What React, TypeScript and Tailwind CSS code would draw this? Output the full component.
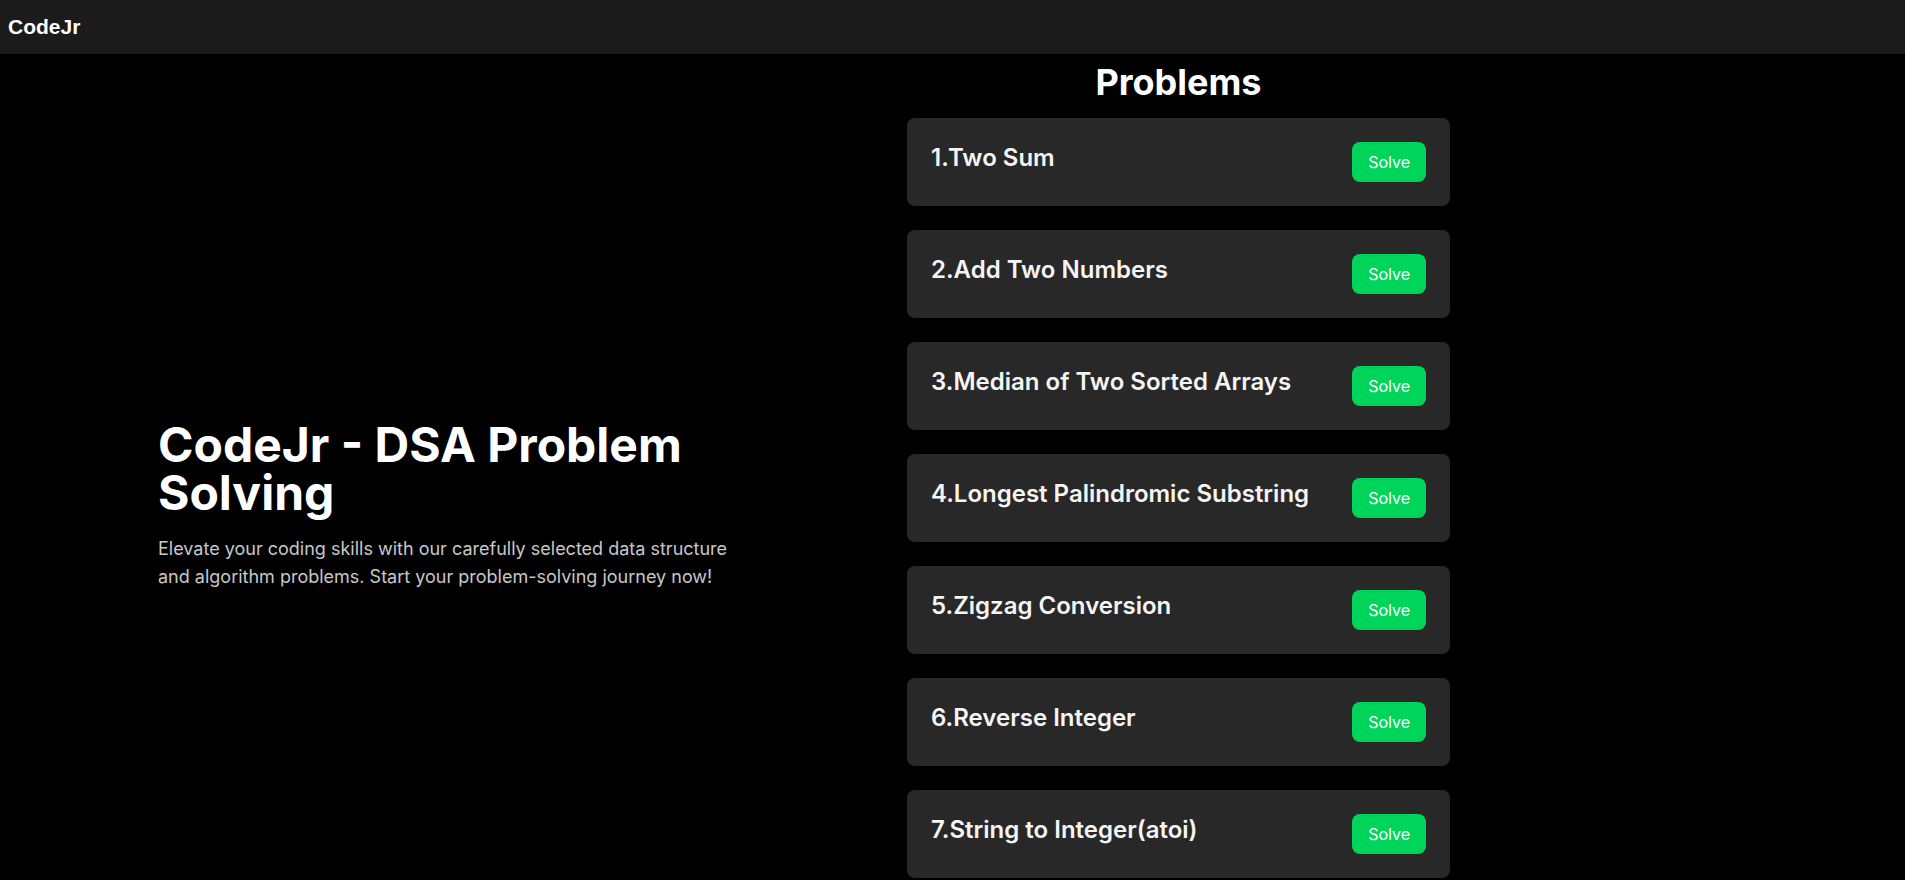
import React from 'react';

const problems = [
  "Two Sum",
  "Add Two Numbers",
  "Median of Two Sorted Arrays",
  "Longest Palindromic Substring",
  "Zigzag Conversion",
  "Reverse Integer",
  "String to Integer(atoi)",
];

export default function App() {
  return (
    <div className="min-h-screen bg-black text-white font-['Inter',sans-serif]">
      <nav className="h-[54px] bg-[#1b1b1b] flex items-center px-2">
        <span className="font-['Liberation_Sans',Arial,sans-serif] font-bold text-[21px]">CodeJr</span>
      </nav>

      <main className="flex items-start">
        <section className="w-[907px] h-[904px] flex items-center pl-[158px]">
          <div className="max-w-xl">
            <h1 className="text-5xl font-bold leading-none">CodeJr - DSA Problem Solving</h1>
            <p className="mt-[18px] text-lg leading-7 text-[#c8c8c8]">
              Elevate your coding skills with our carefully selected data structure and algorithm problems. Start your
              problem-solving journey now!
            </p>
          </div>
        </section>

        <section className="w-[543px] pt-2">
          <h2 className="text-4xl font-bold text-center mb-4">Problems</h2>
          <div className="flex flex-col gap-6">
            {problems.map((title, i) => (
              <div key={i} className="bg-[#282828] rounded-lg p-6 flex items-start justify-between">
                <h3 className="text-2xl font-semibold text-[#f5f5f5]">
                  {i + 1}.{title}
                </h3>
                <button className="bg-[#00d55b] text-white text-base font-normal leading-6 px-4 py-2 rounded-lg">
                  Solve
                </button>
              </div>
            ))}
          </div>
        </section>
      </main>
    </div>
  );
}
